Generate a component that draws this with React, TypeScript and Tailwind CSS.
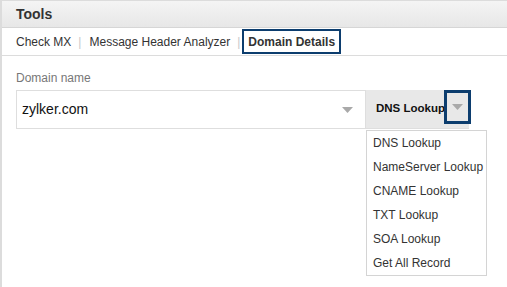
import { useState } from 'react';

const options = ['DNS Lookup', 'NameServer Lookup', 'CNAME Lookup', 'TXT Lookup', 'SOA Lookup', 'Get All Record'];

function Caret() {
  return (
    <svg width="11" height="6" viewBox="0 0 11 6">
      <path d="M0 0 L11 0 L5.5 6 Z" fill="#a9a9a9" />
    </svg>
  );
}

export default function App() {
  const [domain, setDomain] = useState('zylker.com');
  const [lookup] = useState('DNS Lookup');

  return (
    <div className="w-[507px] h-[287px] bg-white border-l-2 border-t border-[#dcdcdc] font-['Liberation_Sans',Arial,sans-serif] overflow-hidden">
      <div className="h-[27px] bg-gradient-to-b from-[#f4f4f4] to-[#e7e7e7] border-b border-[#d6d6d6] flex items-center pl-[14px]">
        <span className="text-[14px] font-bold text-[#333]">Tools</span>
      </div>
      <div className="h-[28px] flex items-center pl-[14px] border-b border-[#dcdcdc] text-[12px] text-[#333]">
        <span>Check MX</span>
        <span className="ml-[7px] mr-[8px] text-[#c8c8c8]">|</span>
        <span>Message Header Analyzer</span>
        <span className="ml-[7px] mr-[2px] text-[#c8c8c8]">|</span>
        <span className="border-2 border-[#0c3d6e] px-[4px] h-[25px] flex items-center font-bold text-[12px]">Domain Details</span>
      </div>
      <div className="pl-[14px] pt-[15px]">
        <div className="text-[12px] text-[#777] leading-[14px]">Domain name</div>
        <div className="flex mt-[5px]">
          <div className="w-[350px] h-[39px] border border-[#dedede] flex items-center pl-[5px] pr-[12px]">
            <input
              className="flex-1 outline-none text-[14px] text-[#111] bg-transparent"
              value={domain}
              onChange={(e) => setDomain(e.target.value)}
            />
            <Caret />
          </div>
          <div className="relative">
            <div className="w-[103px] h-[39px] bg-[#e8e8e8] border-b border-[#dedede] flex items-center pl-[10px]">
              <span className="text-[11.5px] font-bold text-[#111]">{lookup}</span>
              <div className="absolute left-[78px] top-0 w-[27px] h-[34px] border-[3px] border-[#0c3d6e] flex items-center justify-center">
                <Caret />
              </div>
            </div>
            <div className="absolute left-0 top-[40px] w-[121px] border border-[#d4d4d4] bg-white">
              {options.map((o) => (
                <div key={o} className="h-[24px] flex items-center pl-[6px] text-[12px] text-[#333]">
                  {o}
                </div>
              ))}
            </div>
          </div>
        </div>
      </div>
    </div>
  );
}
